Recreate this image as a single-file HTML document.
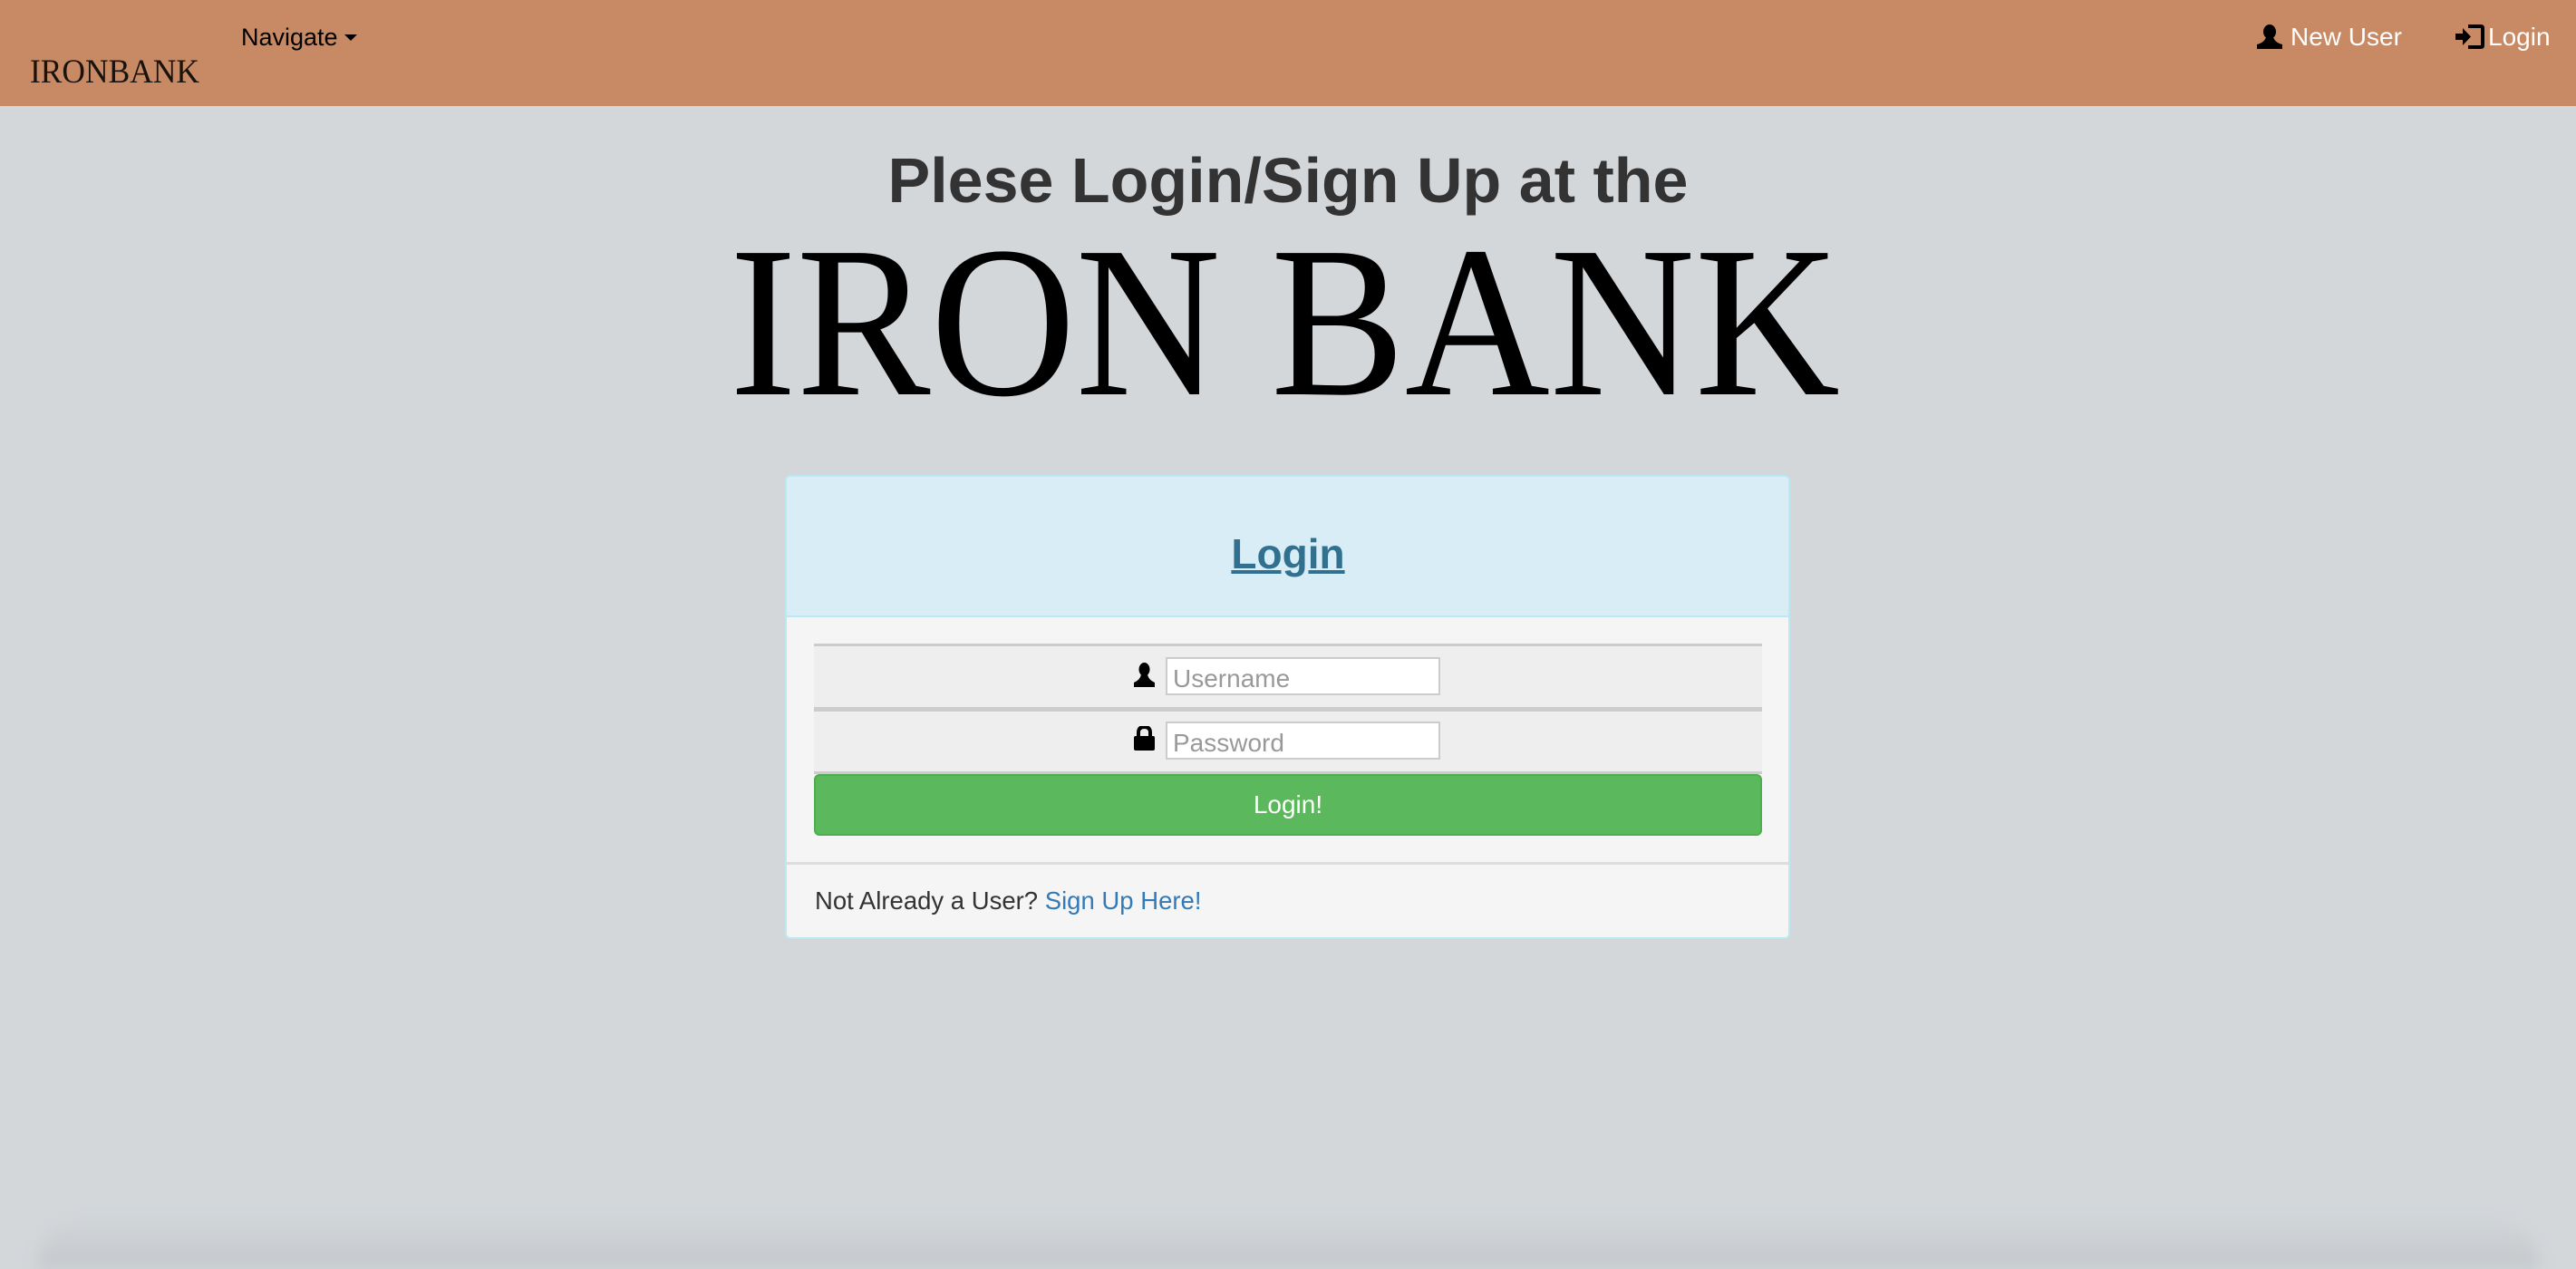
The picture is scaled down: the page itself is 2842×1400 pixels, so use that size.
<!DOCTYPE html>
<html><head><meta charset="utf-8"><style>
*{margin:0;padding:0;box-sizing:border-box}
body{width:2842px;height:1400px;background:#d3d7da;font-family:"Liberation Sans",Arial,sans-serif;position:relative;overflow:hidden}
.abs{position:absolute;white-space:nowrap}
.nav{position:absolute;left:0;top:0;width:2842px;height:117px;background:#c88a65}
.row{position:absolute;left:898px;width:1046px;background:#eeeeee}
.inp{position:absolute;left:1286px;width:303px;height:42px;background:#fff;border:2px solid #ccc;font-size:28px;color:#999;padding:6px 0 0 6px}
</style></head><body>
<div class="nav"></div>
<svg class="abs" style="left:30px;top:60px" width="200" height="36"><text x="3" y="31" font-family="Liberation Serif" font-size="37" textLength="187" lengthAdjust="spacingAndGlyphs" fill="#1a120c">IRONBANK</text></svg>
<div class="abs" style="left:266px;top:26px;font-size:27px;color:#000">Navigate</div>
<svg class="abs" style="left:380px;top:38px" width="14" height="10"><path d="M0 0H14L7 7Z" fill="#000"/></svg>
<svg class="abs" style="left:2490px;top:27px" width="28" height="27" viewBox="0 0 28 27"><ellipse cx="14" cy="8" rx="7" ry="8" fill="#000"/><path d="M10 14 Q8 20 0 22 V27 H28 V22 Q20 20 18 14Z" fill="#000"/></svg>
<div class="abs" style="left:2527px;top:25px;font-size:28px;color:#fff">New User</div>
<svg class="abs" style="left:2709px;top:27px" width="32" height="27" viewBox="0 0 32 27"><path d="M0 10H8V4L17 13.5L8 23V17H0Z" fill="#000"/><path d="M14 2H28Q30 2 30 4V23Q30 25 28 25H14" fill="none" stroke="#000" stroke-width="4"/></svg>
<div class="abs" style="left:2745px;top:25px;font-size:28px;color:#fff">Login</div>

<svg class="abs" style="left:0;top:150px" width="2842" height="90"><text x="1421" y="73" text-anchor="middle" font-family="Liberation Sans" font-weight="bold" font-size="70" textLength="883" lengthAdjust="spacingAndGlyphs" fill="#333">Plese Login/Sign Up at the</text></svg>
<svg class="abs" style="left:800px;top:250px" width="1240" height="210"><text x="5" y="185" font-family="Liberation Serif" font-size="238" textLength="1225" lengthAdjust="spacingAndGlyphs" fill="#000">IRON BANK</text></svg>

<div class="abs" style="left:866px;top:524px;width:1109px;height:512px;border:2px solid #bce8f1;border-radius:6px;background:#f5f5f5;overflow:hidden">
 <div style="height:155px;background:#d9edf7;border-bottom:2px solid #bce8f1"></div>
</div>
<div class="abs" style="left:0;width:2842px;top:584px;text-align:center;font-size:46px;font-weight:bold;color:#31708f;text-decoration:underline;text-decoration-thickness:4px">Login</div>
<div class="row" style="top:710px;height:72px;border-top:3px solid #ccc"></div>
<div class="row" style="top:780px;height:74px;border-top:5px solid #ccc;border-bottom:3px solid #ccc"></div>
<svg class="abs" style="left:1251px;top:731px" width="23" height="27" viewBox="0 0 23 27"><ellipse cx="11.5" cy="7.5" rx="6" ry="7.5" fill="#000"/><path d="M8 13 Q7 19 0 22 V27 H23 V22 Q16 19 15 13Z" fill="#000"/></svg>
<div class="inp" style="top:725px">Username</div>
<svg class="abs" style="left:1251px;top:801px" width="23" height="27" viewBox="0 0 23 27"><path d="M5 12V7Q5 1 11.5 1Q18 1 18 7V12" fill="none" stroke="#000" stroke-width="4"/><rect x="0" y="11" width="23" height="16" rx="2" fill="#000"/></svg>
<div class="inp" style="top:796px">Password</div>
<div class="abs" style="left:898px;top:854px;width:1046px;height:68px;background:#5cb85c;border:2px solid #4cae4c;border-radius:6px;color:#fff;font-size:28px;text-align:center;line-height:64px">Login!</div>
<div class="abs" style="left:868px;top:951px;width:1105px;height:3px;background:#ddd"></div>
<div class="abs" style="left:899px;top:978px;font-size:27.5px;color:#333">Not Already a User? <span style="color:#337ab7">Sign Up Here!</span></div>
<div class="abs" style="left:40px;top:1340px;width:2762px;height:60px;background:linear-gradient(#d3d7da00,#c4c8cb);border-radius:60px 60px 0 0;filter:blur(8px)"></div>
</body></html>
